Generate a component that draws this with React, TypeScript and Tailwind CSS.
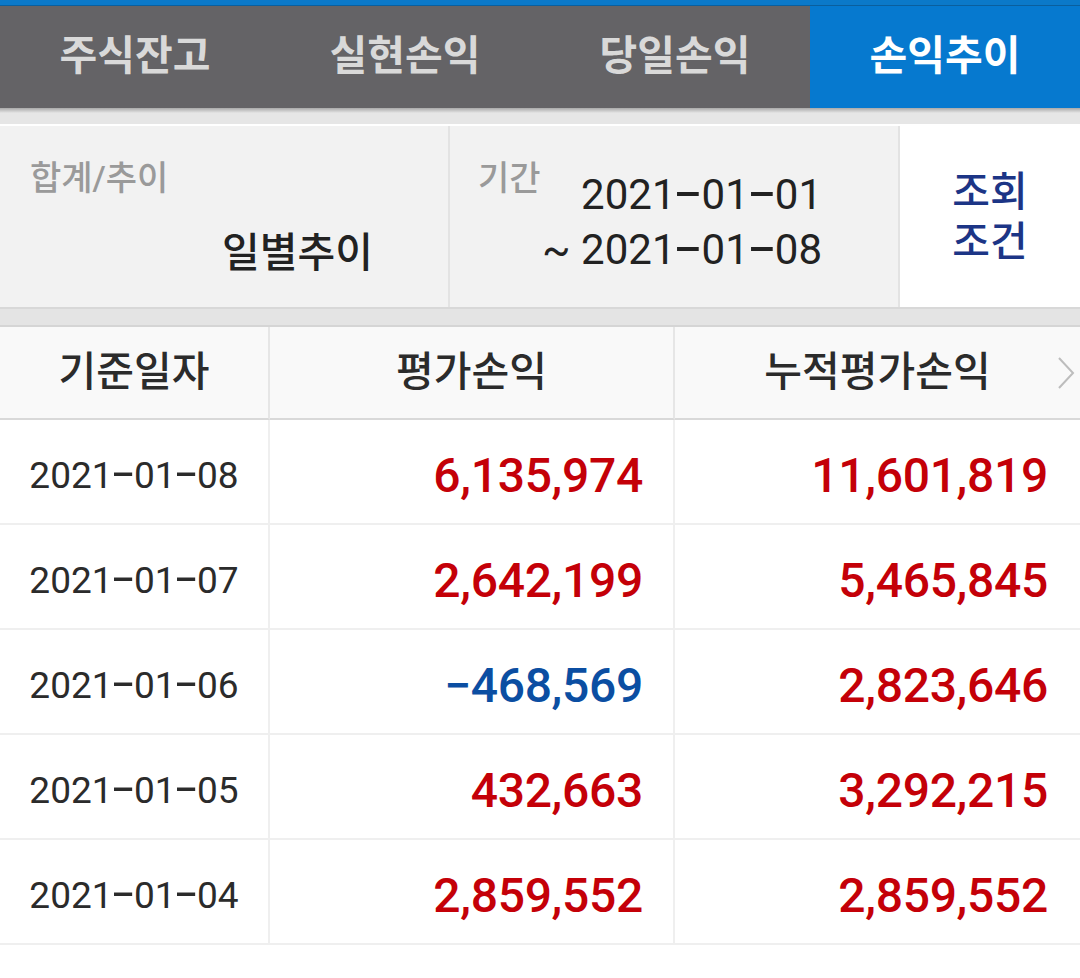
import React from 'react';

const FONT = 'font-["Roboto","Noto_Sans_CJK_KR",sans-serif]';

const TABS = ['주식잔고', '실현손익', '당일손익', '손익추이'];
const ACTIVE_TAB = 3;

interface Row {
  date: string;
  daily: number;
  total: number;
}

const ROWS: Row[] = [
  { date: '2021-01-08', daily: 6135974, total: 11601819 },
  { date: '2021-01-07', daily: 2642199, total: 5465845 },
  { date: '2021-01-06', daily: -468569, total: 2823646 },
  { date: '2021-01-05', daily: 432663, total: 3292215 },
  { date: '2021-01-04', daily: 2859552, total: 2859552 },
];

// negative numbers are shown with a long minus sign
const fmt = (n: number) => (n < 0 ? '−' : '') + Math.abs(n).toLocaleString('en-US');

// device font draws the date hyphen wide, like a minus
const DateText: React.FC<{ value: string; dash: string }> = ({ value, dash }) => {
  const parts = value.split('-');
  return (
    <>
      {parts.map((p, i) => (
        <React.Fragment key={i}>
          {i > 0 && <span className={`inline-block leading-none font-medium -translate-y-[2px] ${dash}`}>-</span>}
          {p}
        </React.Fragment>
      ))}
    </>
  );
};

const Amount: React.FC<{ value: number; pad: string }> = ({ value, pad }) => (
  <div
    className={`flex-1 flex items-center justify-end pt-[8px] ${pad} text-[48px] font-medium tracking-[-0.3px] ${
      value < 0 ? 'text-[#0b4ea2]' : 'text-[#c40008]'
    }`}
  >
    {fmt(value)}
  </div>
);

export default function App() {
  return (
    <div className={`w-full h-[978px] bg-white overflow-hidden ${FONT}`}>
      {/* top status strip */}
      <div className="h-[6px] bg-[#0b79c9] border-b border-[#0a5f9e]" />

      {/* tabs */}
      <div className="grid grid-cols-4 h-[102px] bg-[#646366]">
        {TABS.map((t, i) => (
          <div
            key={t}
            className={`flex items-center justify-center text-[41px] font-bold ${
              i === ACTIVE_TAB ? 'bg-[#0679cf] text-white' : 'text-[#d9d9d9]'
            }`}
          >
            {t}
          </div>
        ))}
      </div>
      <div className="h-[5px] bg-gradient-to-b from-[#a9a9a9] to-[#e6e6e6]" />
      <div className="h-[11px] bg-[#e6e6e6]" />
      <div className="h-[2px] bg-white" />

      {/* filter panel */}
      <div className="flex h-[183px] bg-[#f2f2f2] border-b-2 border-[#d8d8d8]">
        <div className="w-[450px] flex flex-col border-r-2 border-[#e3e3e3] pl-[30px] pr-[75px] pt-[33px]">
          <div className="text-[34px] leading-[38px] font-medium text-[#9a9a9a]">합계/추이</div>
          <div className="mt-[28px] text-right text-[41px] leading-[56px] font-medium text-[#222]">일별추이</div>
        </div>
        <div className="w-[450px] flex justify-between border-r-2 border-[#e3e3e3] pl-[28px] pr-[76px] pt-[33px]">
          <div className="text-[34px] leading-[38px] font-medium text-[#9a9a9a]">기간</div>
          <div className="mt-[8px] text-right text-[42px] leading-[55px] text-[#222]">
            <div>
              <DateText value="2021-01-01" dash="mx-[0.14em] scale-x-[2]" />
            </div>
            <div>
              ~ <DateText value="2021-01-08" dash="mx-[0.14em] scale-x-[2]" />
            </div>
          </div>
        </div>
        <div className="flex-1 flex flex-col items-center justify-center bg-white text-[41px] leading-[50px] font-medium text-[#1c3586]">
          <div>조회</div>
          <div>조건</div>
        </div>
      </div>
      <div className="h-[18px] bg-[#e4e4e4] border-b-2 border-[#d5d5d5]" />

      {/* table */}
      <div className="grid grid-cols-[270px_405px_1fr]">
        <div className="h-[93px] flex items-center justify-center bg-[#f9f9f9] border-r-2 border-b-2 border-[#e6e6e6] border-b-[#d9d9d9] text-[41px] font-medium text-[#2b2b2b]">
          기준일자
        </div>
        <div className="h-[93px] flex items-center justify-center bg-[#f9f9f9] border-r-2 border-b-2 border-[#e6e6e6] border-b-[#d9d9d9] text-[41px] font-medium text-[#2b2b2b]">
          평가손익
        </div>
        <div className="relative h-[93px] flex items-center justify-center bg-[#f9f9f9] border-b-2 border-[#d9d9d9] text-[41px] font-medium text-[#2b2b2b]">
          누적평가손익
          <svg className="absolute right-[4px] top-[29px]" width="20" height="34" viewBox="0 0 20 34" fill="none">
            <polyline points="3,2 17,17 3,32" stroke="#bdbdbd" strokeWidth="2" />
          </svg>
        </div>

        {ROWS.map((r) => (
          <React.Fragment key={r.date}>
            <div className="h-[105px] flex items-center justify-center pt-[8px] border-r-2 border-b-2 border-[#efefef] text-[37px] text-[#2b2b2b]">
              <div>
                <DateText value={r.date} dash="mx-[0.12em] scale-x-[1.9]" />
              </div>
            </div>
            <div className="h-[105px] border-r-2 border-b-2 border-[#efefef] flex">
              <Amount value={r.daily} pad="pr-[30px]" />
            </div>
            <div className="h-[105px] border-b-2 border-[#efefef] flex">
              <Amount value={r.total} pad="pr-[32px]" />
            </div>
          </React.Fragment>
        ))}
      </div>
    </div>
  );
}
